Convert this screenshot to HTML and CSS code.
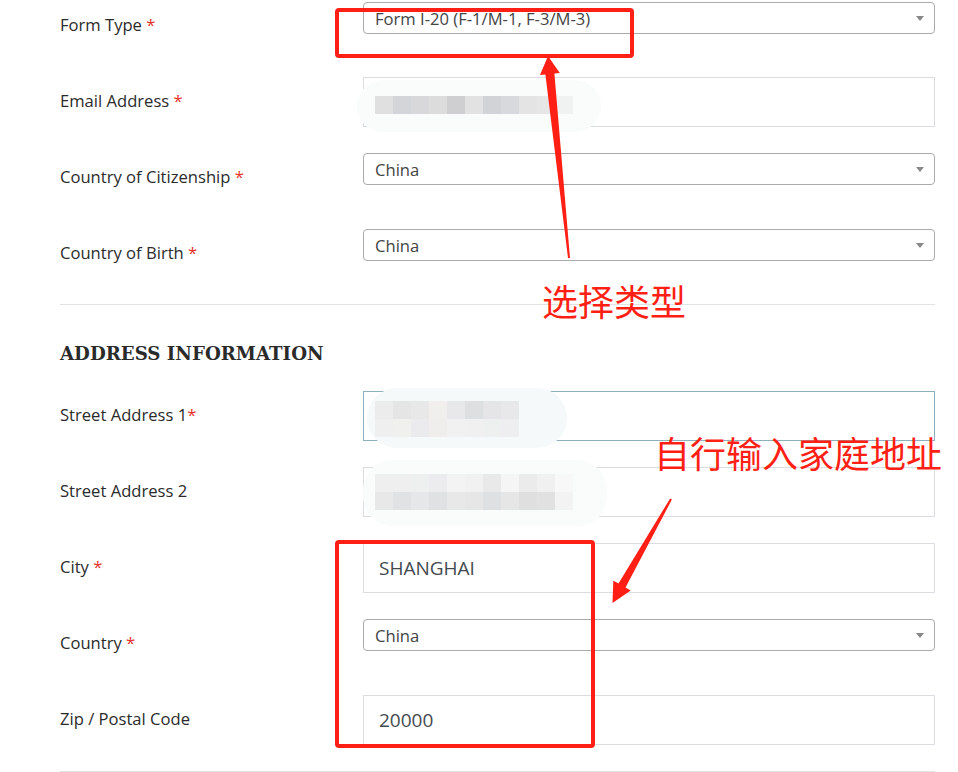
FILE: index.html
```html
<!DOCTYPE html>
<html lang="en">
<head>
<meta charset="utf-8">
<title>Form</title>
<link rel="stylesheet" href="styles.css">
</head>
<body>
<div class="page">
  <div class="row">
    <div class="label">Form Type <span class="req">*</span></div>
    <div class="field"><div class="select">Form I-20 (F-1/M-1, F-3/M-3)<span class="caret"></span></div></div>
  </div>
  <div class="row">
    <div class="label">Email Address <span class="req">*</span></div>
    <div class="field"><div class="input">
      <div class="blob blob-email">
        <div class="px" style="background:#e0e0e0"></div><div class="px" style="background:#d3d5d8"></div><div class="px" style="background:#d8d8da"></div><div class="px" style="background:#dcdcdc"></div><div class="px" style="background:#cfcfd1"></div><div class="px" style="background:#e2e2e3"></div><div class="px" style="background:#d2d3d6"></div><div class="px" style="background:#d8d9dc"></div><div class="px" style="background:#e4e4e4"></div><div class="px" style="background:#e6e6e6"></div><div class="px" style="background:#f0f1f1"></div>
      </div>
    </div></div>
  </div>
  <div class="row">
    <div class="label">Country of Citizenship <span class="req">*</span></div>
    <div class="field"><div class="select">China<span class="caret"></span></div></div>
  </div>
  <div class="row">
    <div class="label">Country of Birth <span class="req">*</span></div>
    <div class="field"><div class="select">China<span class="caret"></span></div></div>
  </div>

  <hr class="rule">

  <h2 class="heading">ADDRESS INFORMATION</h2>

  <div class="row">
    <div class="label">Street Address 1<span class="req">*</span></div>
    <div class="field"><div class="input focus">
      <div class="blob blob-s1">
        <div class="px" style="background:#ececec"></div><div class="px" style="background:#e5e5e5"></div><div class="px" style="background:#e8e8e9"></div><div class="px" style="background:#f0efed"></div><div class="px" style="background:#e8e8ea"></div><div class="px" style="background:#dedfe0"></div><div class="px" style="background:#e5e5e7"></div><div class="px" style="background:#e8e8ea"></div>
        <div class="px" style="background:#efefef"></div><div class="px" style="background:#f0f0ef"></div><div class="px" style="background:#ebebed"></div><div class="px" style="background:#efeeed"></div><div class="px" style="background:#f1f1f2"></div><div class="px" style="background:#eff0ef"></div><div class="px" style="background:#eeefef"></div><div class="px" style="background:#eeeef0"></div>
      </div>
    </div></div>
  </div>
  <div class="row">
    <div class="label">Street Address 2</div>
    <div class="field"><div class="input">
      <div class="blob blob-s2">
        <div class="px" style="background:#efefef"></div><div class="px" style="background:#efeff0"></div><div class="px" style="background:#eef0ef"></div><div class="px" style="background:#ececee"></div><div class="px" style="background:#f3f3f3"></div><div class="px" style="background:#f1f1f1"></div><div class="px" style="background:#e9e9e9"></div><div class="px" style="background:#f5f5f5"></div><div class="px" style="background:#eaebea"></div><div class="px" style="background:#f0f0f0"></div><div class="px" style="background:#f8f8f8"></div>
        <div class="px" style="background:#e8e8e8"></div><div class="px" style="background:#e1e2e3"></div><div class="px" style="background:#e6e7e8"></div><div class="px" style="background:#e0e1e2"></div><div class="px" style="background:#e8e8e9"></div><div class="px" style="background:#e6e6e6"></div><div class="px" style="background:#dfe0e1"></div><div class="px" style="background:#e6e6e6"></div><div class="px" style="background:#dfdfe0"></div><div class="px" style="background:#e1e1e2"></div><div class="px" style="background:#f3f3f3"></div>
      </div>
    </div></div>
  </div>
  <div class="row">
    <div class="label">City <span class="req">*</span></div>
    <div class="field"><div class="input"><span class="value">SHANGHAI</span></div></div>
  </div>
  <div class="row">
    <div class="label">Country <span class="req">*</span></div>
    <div class="field"><div class="select">China<span class="caret"></span></div></div>
  </div>
  <div class="row">
    <div class="label">Zip / Postal Code</div>
    <div class="field"><div class="input"><span class="value">20000</span></div></div>
  </div>

  <hr class="rule">

  <div class="mark mark-1"></div>
  <div class="mark mark-2"></div>
  <div class="note note-1">选择类型</div>
  <div class="note note-2">自行输入家庭地址</div>
  <svg class="arrows" width="958" height="772" viewBox="0 0 958 772">
    <polygon fill="#ff1f14" points="548,56 559.8,72.9 554.4,73.4 570,258 568,258 545.4,74.4 540,74.9"/>
    <polygon fill="#ff1f14" points="612.5,603 613.3,580.7 618.5,583.6 670.1,498.5 671.9,499.5 625.5,587.6 630.7,590.5"/>
  </svg>
</div>
</body>
</html>
```

FILE: styles.css
```css
html, body {
  margin: 0;
  padding: 0;
  background: #ffffff;
  overflow: hidden;
}
body {
  font-family: "Open Sans", "Liberation Sans", sans-serif;
  color: #333333;
}
.page {
  position: relative;
  width: 958px;
  height: 772px;
  padding: 1px 23px 0 60px;
  box-sizing: border-box;
}
.row {
  display: flex;
  align-items: flex-start;
  height: 50px;
  margin-bottom: 26px;
}
.label {
  width: 303px;
  flex: none;
  height: 50px;
  box-sizing: border-box;
  padding-bottom: 3px;
  display: flex;
  align-items: center;
  font-size: 16.6px;
  color: #2b2b2b;
  white-space: pre;
}
.req {
  color: #e4322b;
}
.field {
  flex: 1;
  height: 50px;
}
.select {
  position: relative;
  height: 32px;
  box-sizing: border-box;
  border: 1px solid #aaaaaa;
  border-radius: 4px;
  padding: 0 11px;
  display: flex;
  align-items: center;
  font-size: 16.6px;
  color: #444444;
}
.row:first-child .select {
  margin-top: 1px;
}
.caret {
  position: absolute;
  right: 10px;
  top: 13px;
  width: 0;
  height: 0;
  border-left: 4px solid transparent;
  border-right: 4px solid transparent;
  border-top: 5px solid #888888;
}
.input {
  position: relative;
  height: 50px;
  box-sizing: border-box;
  border: 1px solid #dcdde1;
  display: flex;
  align-items: center;
  padding: 0 15px;
  font-size: 19px;
  color: #444a50;
}
.input.focus {
  border-color: #8db0bd;
}
.rule {
  margin: 0;
  border: 0;
  border-top: 1px solid #e2e2e2;
  height: 0;
}
.page > .rule:first-of-type {
  margin-top: -1px;
}
.heading {
  margin: 39px 0 27px;
  height: 20px;
  line-height: 20px;
  font-family: "DejaVu Serif", "Liberation Serif", serif;
  font-weight: 700;
  font-size: 18.2px;
  color: #2a2a2a;
  letter-spacing: 0;
}
.blob {
  position: absolute;
  display: grid;
  grid-template-columns: repeat(11, 18px);
  grid-auto-rows: 18px;
  align-content: start;
  border-radius: 30px;
  background: #fafbfb;
}
.blob-email {
  left: -7px;
  top: 2px;
  width: 244px;
  height: 52px;
  padding: 16px 0 0 18px;
  box-sizing: border-box;
}
.blob-s1 {
  left: 3px;
  top: -4px;
  width: 200px;
  height: 60px;
  padding: 13px 0 0 8px;
  box-sizing: border-box;
  grid-template-columns: repeat(8, 18px);
  background: #f6f9fa;
}
.blob-s2 {
  left: -1px;
  top: -8px;
  width: 244px;
  height: 66px;
  padding: 14px 0 0 12px;
  box-sizing: border-box;
}
.px {
  width: 18px;
  height: 18px;
}
.mark {
  position: absolute;
  border: 4px solid #ff1f14;
  border-radius: 4px;
  box-sizing: border-box;
}
.mark-1 {
  left: 335px;
  top: 8px;
  width: 299px;
  height: 50px;
}
.mark-2 {
  left: 335px;
  top: 540px;
  width: 260px;
  height: 208px;
}
.note {
  position: absolute;
  font-family: "Noto Sans CJK SC", sans-serif;
  font-size: 36px;
  line-height: 40px;
  color: #ff1f14;
  white-space: nowrap;
}
.note-1 {
  left: 542px;
  top: 280px;
}
.note-2 {
  left: 654px;
  top: 432px;
}
.arrows {
  position: absolute;
  left: 0;
  top: 0;
  pointer-events: none;
}
```
